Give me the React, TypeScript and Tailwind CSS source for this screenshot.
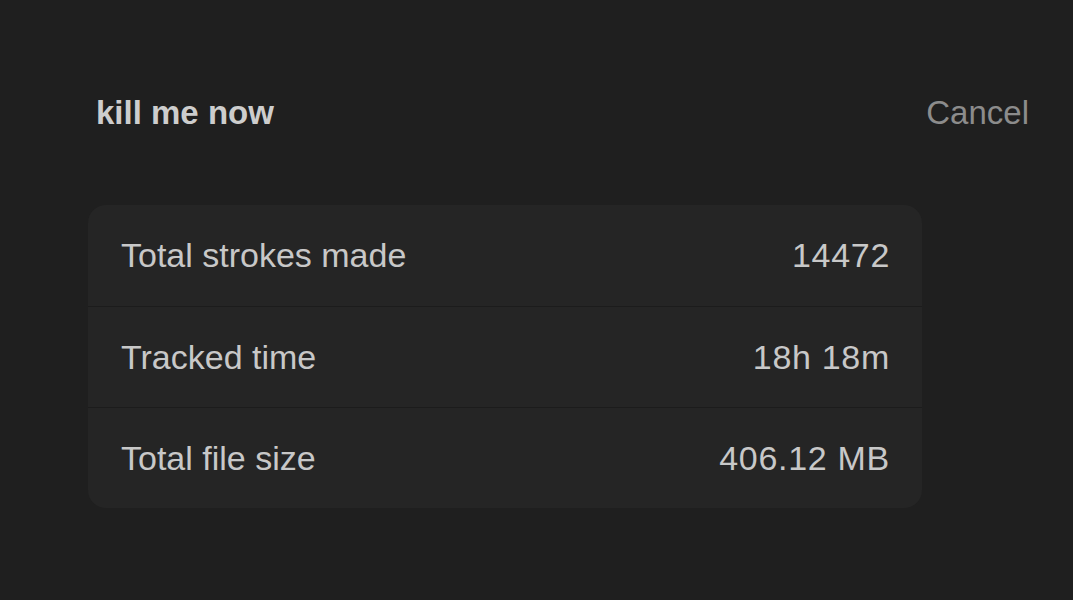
const rows = [
  { label: 'Total strokes made', value: '14472' },
  { label: 'Tracked time', value: '18h 18m' },
  { label: 'Total file size', value: '406.12 MB' },
];

export default function App() {
  return (
    <div
      className="h-[600px] w-full bg-[#1f1f1f] overflow-hidden"
      style={{ fontFamily: '"Liberation Sans", Arial, sans-serif' }}
    >
      {/* Header */}
      <div className="flex items-center justify-between pt-[93px] pl-[96px] pr-[44px]">
        <span className="text-[33px] leading-[40px] font-bold text-[#cdcdcd]">kill me now</span>
        <span className="text-[33px] leading-[40px] text-[#8c8c8c]">Cancel</span>
      </div>

      {/* Stats card */}
      <div className="mt-[72px] ml-[88px] w-[834px] rounded-[18px] bg-[#252525] overflow-hidden">
        {rows.map((row, i) => (
          <div
            key={row.label}
            className={
              'flex h-[101px] items-center justify-between pl-[33px] pr-[32px] text-[34px] text-[#c8c8c8]' +
              (i > 0 ? ' border-t border-[#1c1c1c]' : '')
            }
          >
            <span>{row.label}</span>
            <span className="tracking-[0.7px]">{row.value}</span>
          </div>
        ))}
      </div>
    </div>
  );
}
